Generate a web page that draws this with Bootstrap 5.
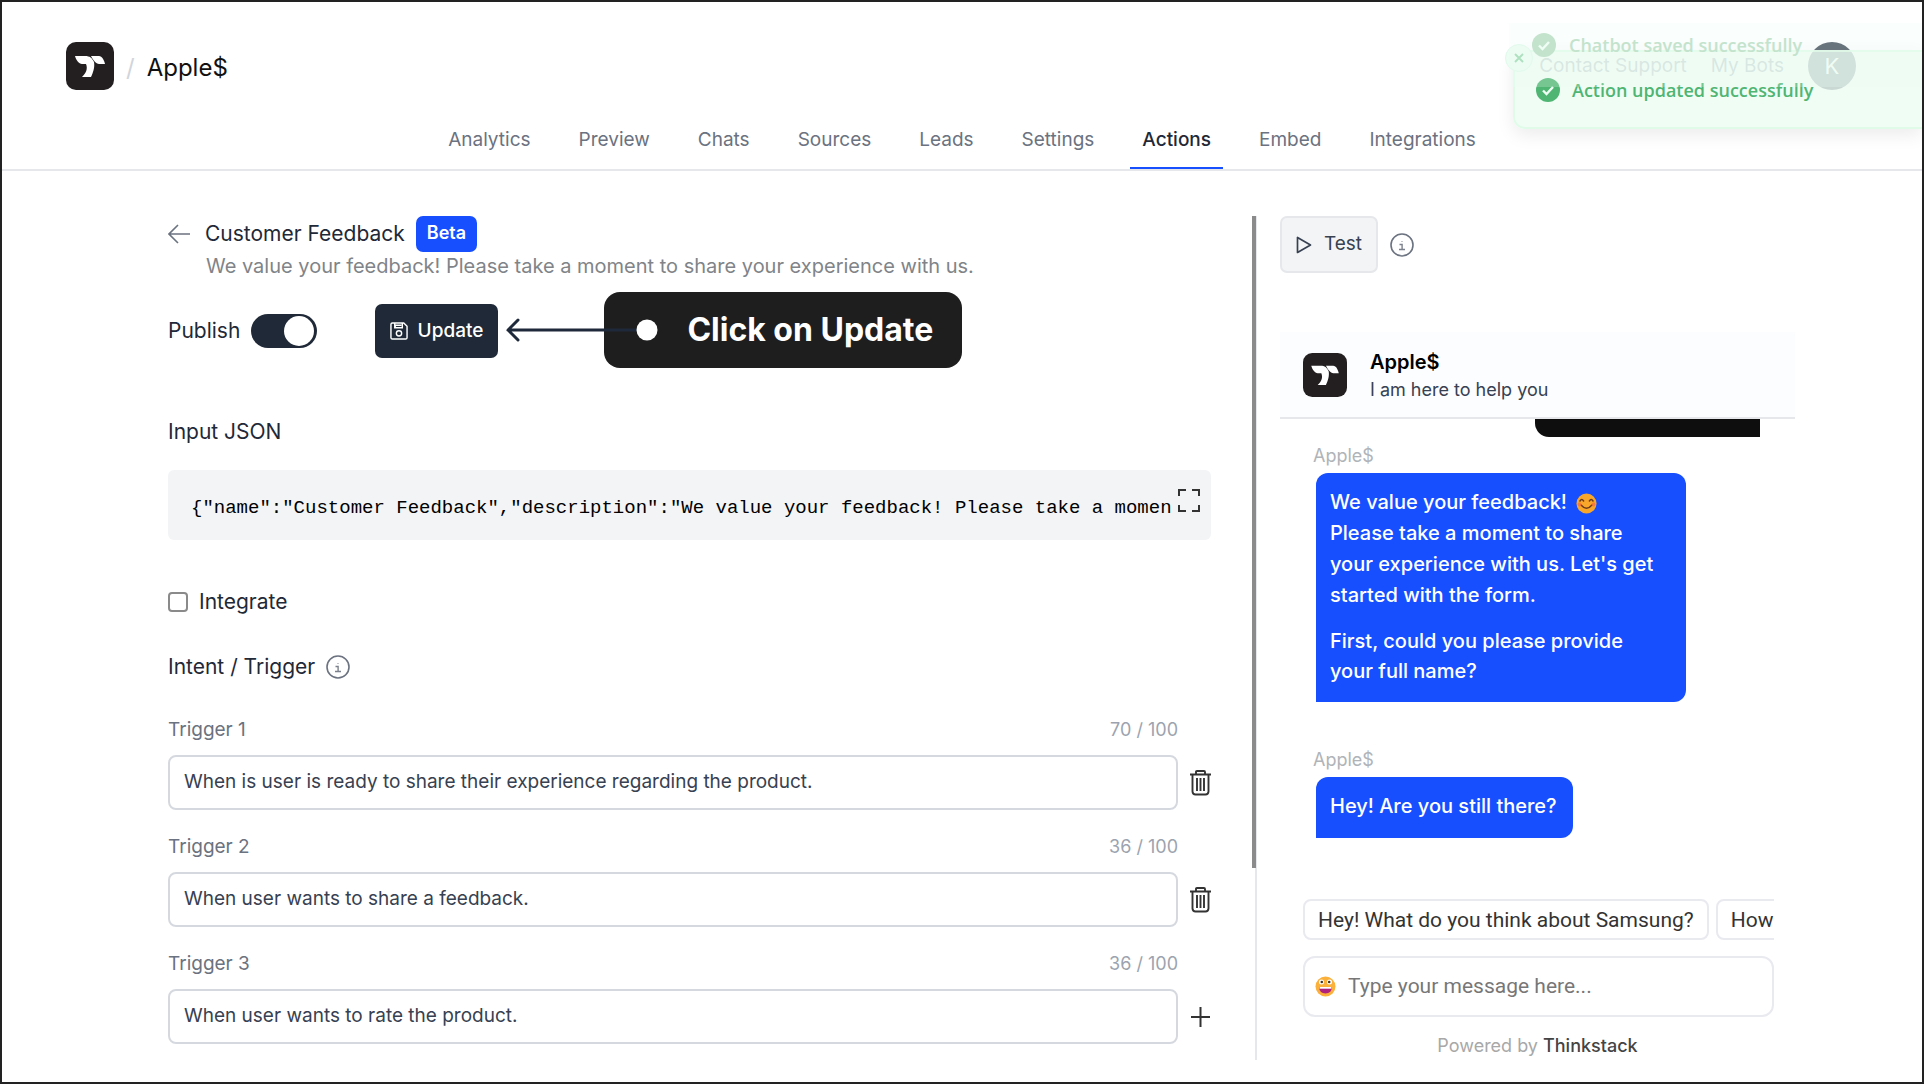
<!DOCTYPE html>
<html lang="en">
<head>
<meta charset="utf-8">
<meta name="viewport" content="width=device-width, initial-scale=1">
<title>Apple$ – Actions</title>
<link href="https://cdn.jsdelivr.net/npm/bootstrap@5.3.0/dist/css/bootstrap.min.css" rel="stylesheet">
<style>
  body { font-family: Inter, "Liberation Sans", sans-serif; font-size: 20px; line-height: 30px; color: #1f2937; background: #fff; }
  svg { display: block; flex: none; }
  .app-frame { border: 2px solid #222; min-height: 100vh; position: relative; overflow: hidden; }
  .app-header { border-bottom: 2px solid #e5e7eb; }
  .brand-bar { padding: 40px 66px 0 64px; height: 112px; }
  .brand-name { font-size: 24px; color: #111; }
  .brand-slash { font-size: 24px; color: #d1d5db; }
  .head-link { color: #6b7280; text-decoration: none; font-size: 19px; }
  .avatar-k { width: 48px; height: 48px; border-radius: 50%; background: #3d4856; color: #fff; font-size: 22px; }
  .tabs-bar { gap: 24px; }
  .tabs-bar .nav-link { padding: 11px 12px 12px; color: #6b7280; font-size: 19px; border-bottom: 2px solid transparent; }
  .tabs-bar .nav-link.active { color: #1f2937; border-color: #174fff; font-weight: 500; }

  .main-area { padding: 45px 127px 22px 166px; }
  .editor-pane { position: relative; flex: 1 1 0; min-width: 0; padding-right: 44px; border-right: 2px solid #e5e7eb; min-height: 844px; }
  .scroll-thumb { position: absolute; right: -1px; top: 0; width: 4px; height: 652px; background: #8b8b8b; }
  .test-pane { width: 515px; margin-left: 23px; }
  .row-title { font-size: 21px; }
  .gap-label { gap: 11px; }

  .beta-tag { background: #174fff; color: #fff; border-radius: 7px; font-size: 18px; font-weight: 600; padding: 0 11px; height: 36px; line-height: 33px; }
  .lead-note { color: #808488; padding-left: 38px; line-height: 28px; }
  .publish-row { height: 54px; margin-top: 24px; }
  .publish-row .form-check-input { width: 66px; height: 34px; margin: 0; border: 0; background-color: #1f2937; border-radius: 34px; background-size: 34px; box-shadow: none; }
  .publish-row .form-check-input:checked { background-color: #1f2937; background-image: url("data:image/svg+xml,%3csvg xmlns='http://www.w3.org/2000/svg' viewBox='0 0 34 34'%3e%3ccircle cx='16' cy='17' r='15' fill='%23fff'/%3e%3c/svg%3e"); }
  .update-wrap { position: relative; margin-left: 47px; }
  .btn-update, .btn-update:hover { background: #1f2937; color: #fff; height: 54px; width: 123px; border-radius: 7px; font-size: 19px; font-weight: 500; padding: 0 14px; }
  .callout-tip { position: absolute; left: 131px; top: -12px; display: flex; align-items: center; }
  .callout-box { margin-left: 98px; width: 358px; height: 76px; border-radius: 16px; background: #1e1e1e; color: #fff; font-size: 32px; font-weight: 700; padding-left: 83px; }
  .callout-arrow { position: absolute; left: 0; top: 26px; }

  .json-title { margin-top: 59px; }
  .json-box { background: #f3f4f6; border-radius: 6px; height: 70px; padding: 0 11px 0 23px; margin-top: 23px; }
  .json-box code { font: 19px/28px "Liberation Mono", monospace; color: #000; white-space: pre; overflow: hidden; flex: 1 1 0; padding-top: 6px; }
  .json-box .icon-btn { margin-left: 7px; margin-bottom: 10px; }
  .check-row { margin-top: 47px; }
  .check-row .form-check-input { width: 20px; height: 20px; margin: 0; border: 2px solid #8a8a8a; border-radius: 4px; }
  .intent-row { margin-top: 35px; }
  .trigger-list { margin-top: 35px; }
  .trigger-item { margin-bottom: 24px; }
  .trigger-cap { font-size: 19px; line-height: 26px; margin-right: 33px; margin-bottom: 12px; color: #6b7280; }
  .trigger-cap span { color: #9ca3af; font-size: 18px; }
  .trigger-item .form-control { height: 55px; border: 2px solid #d5d9df; border-radius: 8px; padding: 0 14px 3px; font-size: 19px; color: #374151; }
  .icon-btn { border: 0; background: none; padding: 0; margin-left: 12px; }

  .btn-test { width: 98px; height: 57px; border: 2px solid #e5e7eb; background: #f3f4f6; border-radius: 7px; font-size: 19px; color: #374151; padding: 0 14px; }
  .bot-head { margin-top: 59px; height: 87px; background: #fcfdff; border-bottom: 2px solid #e5e7eb; padding-left: 23px; gap: 23px; }
  .bot-title { font-weight: 600; font-size: 20px; line-height: 28px; color: #000; padding-top: 2px; }
  .bot-sub { font-size: 18px; line-height: 28px; color: #374151; }
  .user-bubble { width: 225px; height: 18px; background: #0e0e0e; border-bottom-left-radius: 14px; margin-left: auto; margin-right: 35px; }
  .bot-label { font-size: 18px; line-height: 22px; color: #b0b4b8; padding-left: 33px; margin-bottom: 6px; }
  .bot-bubble { background: #174fff; color: #fff; font-weight: 500; border-radius: 12px 12px 12px 0; margin-left: 36px; padding: 14px 16px 16px 14px; line-height: 31px; width: fit-content; max-width: 370px; }
  .bot-bubble p { margin: 0 0 15px; padding-right: 4px; }
  .bot-bubble p:last-child { margin: 0; line-height: 30px; }
  .second-label { margin-top: 47px; }
  .chip-row { margin: 61px 21px 0 23px; gap: 7px; overflow: hidden; }
  .chip { flex: none; height: 41px; border: 2px solid #e9e9f0; border-radius: 8px; background: #fff; color: #333; padding: 0 13px; font-family: Roboto, sans-serif; font-size: 21px; }
  .msg-box { margin: 16px 21px 0 23px; height: 61px; border: 2px solid #e9e9f0; border-radius: 12px; padding: 0 10px; gap: 12px; }
  .msg-box input { border: 0; outline: 0; flex: 1 1 0; min-width: 0; font-family: Roboto, sans-serif; font-size: 21px; padding: 0 0 2px; }
  .msg-box input::placeholder { color: #777; }
  .powered { font-size: 18px; line-height: 24px; color: #a8a8a8; margin-top: 17px; }
  .powered b { font-weight: 500; color: #444; }

  .toast-back, .toast-front { position: absolute; right: 0; font-family: "Open Sans", "Noto Sans", sans-serif; font-weight: 600; font-size: 18px; display: flex; }
  .toast-back { z-index: 2; top: 21px; width: 413px; height: 64px; padding: 10px 0 0 23px; gap: 13px; background: rgba(236,253,243,.25); color: #c3e3cd; }
  .toast-front { z-index: 1; top: 48px; width: 409px; height: 79px; padding: 26px 0 0 21px; gap: 12px; background: rgba(236,253,243,.8); border: 2px solid rgba(220,252,231,.8); border-right: 0; border-radius: 12px 0 0 12px; color: #4fb572; box-shadow: 0 6px 18px rgba(0,0,0,.08); }
  .toast-back > span, .toast-front > span { line-height: 24px; }
  .toast-close { position: absolute; left: -10px; top: -8px; width: 28px; height: 28px; border: 1px solid #dffaea; border-radius: 50%; background: #ecfdf3; padding: 0; }
</style>
</head>
<body>
<svg width="0" height="0" class="position-absolute" aria-hidden="true">
  <symbol id="logo" viewBox="0 0 48 48"><rect width="48" height="48" rx="10" fill="#231f20"/><path d="M9 14h10c5 0 7 2 9 6 1 5-1 11-3 15h-9c4-4 6-8 4-13h-4c-3 0-6-4-7-8z" fill="#fff"/><path d="M25 14h8c3 0 5 4 6 8h-6c-3 0-6-4-8-8z" fill="#fff"/></symbol>
  <symbol id="info" viewBox="0 0 24 24"><circle cx="12" cy="12" r="11" fill="none" stroke="#6b7280" stroke-width="1.6"/><path d="M9.5 11.500h2.600v5M9 16.500h6" fill="none" stroke="#7b818d" stroke-width="1.400"/><circle cx="12" cy="8.500" r=".6" fill="#7b818d"/></symbol>
  <symbol id="trash" viewBox="0 0 21 26"><path d="M0 4.500h21M6 4V2q0-1 1-1h7q1 0 1 1v2M2.500 5v16.500q.2 3 3 3h10q2.800 0 3-3V5M7 8v13M10.500 8v13M14 8v13" fill="none" stroke="#333" stroke-width="1.900"/></symbol>
  <symbol id="tick" viewBox="0 0 24 24"><circle cx="12" cy="12" r="12" fill="currentColor"/><path d="M7 12.500l3.500 3.500L17 9" fill="none" stroke="#effdf4" stroke-width="2.400"/></symbol>
</svg>
<div class="app-frame">
  <header class="app-header">
    <div class="brand-bar d-flex align-items-start justify-content-between">
      <div class="d-flex align-items-center">
        <svg width="48" height="48"><use href="#logo"/></svg>
        <span class="brand-slash ms-2 ps-1 pt-1">/</span>
        <span class="brand-name ms-2 ps-1 pt-1">Apple$</span>
      </div>
      <div class="d-flex align-items-center gap-4">
        <a class="head-link" href="#">Contact Support</a>
        <a class="head-link" href="#">My Bots</a>
        <div class="avatar-k d-flex align-items-center justify-content-center">K</div>
      </div>
    </div>
    <nav class="nav tabs-bar justify-content-center">
      <a class="nav-link" href="#">Analytics</a>
      <a class="nav-link" href="#">Preview</a>
      <a class="nav-link" href="#">Chats</a>
      <a class="nav-link" href="#">Sources</a>
      <a class="nav-link" href="#">Leads</a>
      <a class="nav-link" href="#">Settings</a>
      <a class="nav-link active" href="#">Actions</a>
      <a class="nav-link" href="#">Embed</a>
      <a class="nav-link" href="#">Integrations</a>
    </nav>
  </header>

  <main class="main-area d-flex">
    <section class="editor-pane">
      <div class="scroll-thumb"></div>
      <div class="d-flex align-items-center gap-label">
        <a class="pe-1" href="#" aria-label="Back"><svg width="22" height="20" viewBox="0 0 22 20"><path d="M22 10H1M10 1L1 10l9 9" fill="none" stroke="#6b7280" stroke-width="1.6"/></svg></a>
        <span class="row-title">Customer Feedback</span>
        <span class="beta-tag">Beta</span>
      </div>
      <div class="lead-note">We value your feedback! Please take a moment to share your experience with us.</div>
      <div class="publish-row d-flex align-items-center gap-label">
        <label class="row-title" for="publish">Publish</label>
        <div class="form-switch p-0"><input class="form-check-input" type="checkbox" role="switch" id="publish" checked></div>
        <div class="update-wrap">
          <button class="btn btn-update d-flex align-items-center justify-content-between" type="button">
            <svg width="18" height="18" viewBox="0 0 19 19"><path d="M2.500 1h12L18 4.500v12q0 1.500-1.500 1.500h-14Q1 18 1 16.500v-14Q1 1 2.500 1zM5 1.500V6h8V1.500M5 6l1-2.500h6" fill="none" stroke="#fff" stroke-width="1.500"/><circle cx="9.500" cy="12" r="2.800" fill="none" stroke="#fff" stroke-width="1.500"/></svg>
            Update
          </button>
          <div class="callout-tip">
            <div class="callout-box d-flex align-items-center">Click on Update</div>
            <svg class="callout-arrow" width="153" height="24" viewBox="0 0 153 24"><path d="M141 12H2M12 2L2 12l10 10" fill="none" stroke="#1e293b" stroke-width="3" stroke-linecap="round"/><circle cx="141" cy="12" r="10.500" fill="#fff"/></svg>
          </div>
        </div>
      </div>

      <div class="json-title row-title">Input JSON</div>
      <div class="json-box d-flex align-items-center">
        <code>{"name":"Customer Feedback","description":"We value your feedback! Please take a moment to share your experience with us."}</code>
        <button class="icon-btn" type="button" aria-label="Expand"><svg width="22" height="23" viewBox="0 0 22 23"><path d="M1 7V1h7M14 1h7v6M21 16v6h-7M8 22H1v-6" fill="none" stroke="#333" stroke-width="2"/></svg></button>
      </div>
      <div class="check-row d-flex align-items-center gap-label">
        <input class="form-check-input" type="checkbox" id="integrate">
        <label class="row-title" for="integrate">Integrate</label>
      </div>
      <div class="intent-row row-title d-flex align-items-center gap-label">Intent / Trigger <svg width="24" height="24"><use href="#info"/></svg></div>

      <div class="trigger-list">
        <div class="trigger-item">
          <div class="trigger-cap d-flex justify-content-between"><label for="t1">Trigger 1</label><span>70 / 100</span></div>
          <div class="d-flex align-items-center"><input class="form-control" id="t1" type="text" value="When is user is ready to share their experience regarding the product."><button class="icon-btn" type="button" aria-label="Delete trigger 1"><svg width="21" height="26"><use href="#trash"/></svg></button></div>
        </div>
        <div class="trigger-item">
          <div class="trigger-cap d-flex justify-content-between"><label for="t2">Trigger 2</label><span>36 / 100</span></div>
          <div class="d-flex align-items-center"><input class="form-control" id="t2" type="text" value="When user wants to share a feedback."><button class="icon-btn" type="button" aria-label="Delete trigger 2"><svg width="21" height="26"><use href="#trash"/></svg></button></div>
        </div>
        <div class="trigger-item mb-0">
          <div class="trigger-cap d-flex justify-content-between"><label for="t3">Trigger 3</label><span>36 / 100</span></div>
          <div class="d-flex align-items-center"><input class="form-control" id="t3" type="text" value="When user wants to rate the product."><button class="icon-btn" type="button" aria-label="Add trigger"><svg width="21" height="20" viewBox="0 0 21 20"><path d="M1 10h19M10.500 0v20" stroke="#333" stroke-width="2"/></svg></button></div>
        </div>
      </div>
    </section>

    <section class="test-pane">
      <div class="d-flex align-items-center">
        <button class="btn btn-test d-flex align-items-center justify-content-between" type="button"><svg width="16" height="18" viewBox="0 0 16 18"><path d="M1.500 1.500v15L14.500 9z" fill="none" stroke="#374151" stroke-width="1.700" stroke-linejoin="round"/></svg>Test</button>
        <svg class="ms-2 ps-1" width="28" height="24"><use href="#info" width="24" height="24"/></svg>
      </div>
      <div class="bot-head d-flex align-items-center">
        <svg width="44" height="44"><use href="#logo"/></svg>
        <div><div class="bot-title">Apple$</div><div class="bot-sub">I am here to help you</div></div>
      </div>
      <div class="user-bubble"></div>
      <div class="bot-label mt-2">Apple$</div>
      <div class="bot-bubble">
        <p>We value your feedback! <svg class="d-inline-block align-text-bottom ms-1" width="21" height="21" viewBox="0 0 21 21"><circle cx="10.500" cy="10.500" r="10" fill="#f9a72b"/><path d="M4 8q1.800-3 3.600 0M13.400 8q1.800-3 3.600 0M5 12q5.500 6.500 11 0" fill="none" stroke="#6b3b1f" stroke-width="1.500" stroke-linecap="round"/><circle cx="3.500" cy="11.500" r="2" fill="#f5693f" opacity=".7"/><circle cx="17.500" cy="11.500" r="2" fill="#f5693f" opacity=".7"/></svg><br>Please take a moment to share your experience with us. Let's get started with the form.</p>
        <p>First, could you please provide your full name?</p>
      </div>
      <div class="bot-label second-label">Apple$</div>
      <div class="bot-bubble">Hey! Are you still there?</div>
      <div class="chip-row d-flex">
        <button class="chip" type="button">Hey! What do you think about Samsung?</button>
        <button class="chip" type="button">How</button>
      </div>
      <div class="msg-box d-flex align-items-center">
        <svg width="21" height="21" viewBox="0 0 21 21"><circle cx="10.500" cy="10.500" r="10" fill="#fbb03b"/><circle cx="6.500" cy="6" r="2.500" fill="#fff"/><circle cx="14.500" cy="6" r="2.500" fill="#fff"/><circle cx="6.800" cy="6" r="1.300" fill="#432"/><circle cx="14.200" cy="6" r="1.300" fill="#432"/><path d="M4 11h13q-.5 6.500-6.500 6.500T4 11z" fill="#b0217e"/><path d="M4.500 11h12v1.700h-12z" fill="#fff"/></svg>
        <input type="text" aria-label="Message" placeholder="Type your message here...">
      </div>
      <div class="powered text-center">Powered by <b>Thinkstack</b></div>
    </section>
  </main>

  <div class="toast-back"><svg width="24" height="24"><use href="#tick"/></svg><span>Chatbot saved successfully</span></div>
  <div class="toast-front"><button class="toast-close" type="button" aria-label="Close"><svg class="m-auto" width="10" height="10" viewBox="0 0 10 10"><path d="M1 1l8 8M9 1L1 9" stroke="#9bd8b0" stroke-width="2"/></svg></button><svg width="24" height="24"><use href="#tick"/></svg><span>Action updated successfully</span></div>
</div>
<script src="https://cdn.jsdelivr.net/npm/bootstrap@5.3.0/dist/js/bootstrap.bundle.min.js"></script>
</body>
</html>
